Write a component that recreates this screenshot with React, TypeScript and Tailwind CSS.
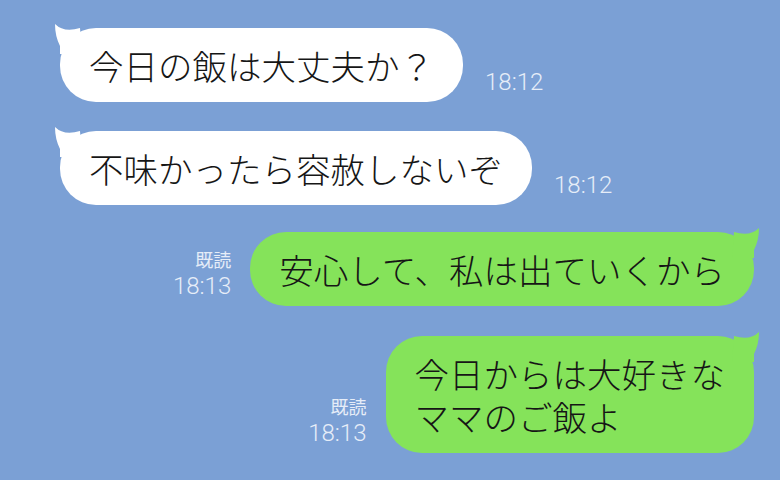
function Tail({ side, color }: { side: 'left' | 'right'; color: string }) {
  return (
    <svg
      width="30"
      height="30"
      viewBox="0 0 30 30"
      className={`absolute -top-[4px] ${side === 'left' ? '-left-[8px]' : '-right-[8px] -scale-x-100'}`}
    >
      <path d="M3 0 Q12 9 28 4 L30 30 L8 30 L8 22 Q3 12 3 0 Z" fill={color} />
    </svg>
  );
}

function Bubble({ side, children }: { side: 'left' | 'right'; children: React.ReactNode }) {
  const color = side === 'left' ? '#ffffff' : '#85e35a';
  return (
    <div
      className={`relative rounded-[36px] px-[29px] py-[15.5px] text-[34.5px] leading-[43px] font-light text-[#161616] ${
        side === 'left' ? 'bg-white' : 'bg-[#85e35a]'
      }`}
    >
      <Tail side={side} color={color} />
      <span className="relative">{children}</span>
    </div>
  );
}

const timeFont = 'font-["Roboto","Liberation_Sans",sans-serif]';

export default function App() {
  return (
    <div
      className='flex h-[480px] w-[780px] flex-col overflow-hidden bg-[#7ba0d5] font-["Noto_Sans_CJK_JP","Noto_Sans",sans-serif]'
    >
      {/* received */}
      <div className="mt-[28px] flex items-end gap-[22px] pl-[60px]">
        <Bubble side="left">今日の飯は大丈夫か？</Bubble>
        <span className={`${timeFont} mb-[7px] text-[24px] leading-[26px] font-light text-[#e6edf8]`}>18:12</span>
      </div>
      <div className="mt-[29px] flex items-end gap-[22px] pl-[60px]">
        <Bubble side="left">不味かったら容赦しないぞ</Bubble>
        <span className={`${timeFont} mb-[7px] text-[24px] leading-[26px] font-light text-[#e6edf8]`}>18:12</span>
      </div>

      {/* sent */}
      <div className="mt-[27px] flex items-end justify-end gap-[19px] pr-[26px]">
        <div className={`${timeFont} mb-[7px] flex flex-col items-end text-[#e6edf8]`}>
          <span className='font-["Noto_Sans_CJK_JP",sans-serif] text-[18px] leading-[22px]'>既読</span>
          <span className="mt-[3px] text-[24px] leading-[26px] font-light">18:13</span>
        </div>
        <Bubble side="right">安心して、私は出ていくから</Bubble>
      </div>
      <div className="mt-[30px] flex items-end justify-end gap-[19px] pr-[26px]">
        <div className={`${timeFont} mb-[7px] flex flex-col items-end text-[#e6edf8]`}>
          <span className='font-["Noto_Sans_CJK_JP",sans-serif] text-[18px] leading-[22px]'>既読</span>
          <span className="mt-[3px] text-[24px] leading-[26px] font-light">18:13</span>
        </div>
        <Bubble side="right">
          今日からは大好きな
          <br />
          ママのご飯よ
        </Bubble>
      </div>
    </div>
  );
}
